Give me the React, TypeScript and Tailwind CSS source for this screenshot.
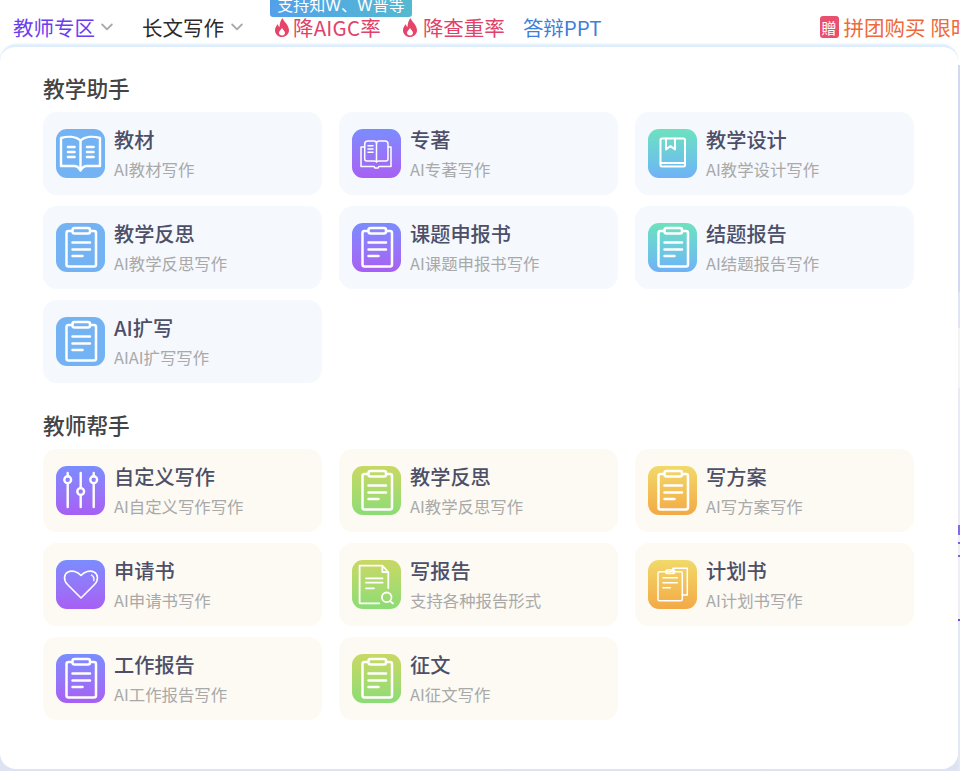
import { ReactNode } from 'react';

const FONT = "font-['Noto_Sans_CJK_SC','Noto_Sans',sans-serif]";
const LATIN = "font-['Inter','Noto_Sans_CJK_SC',sans-serif]";

const BLUE = 'bg-[#74b3f3]';
const PURPLE = 'bg-linear-to-b from-[#7a8cff] to-[#a75ff3]';
const TEAL = 'bg-linear-to-b from-[#6de2bd] to-[#6fb2f8]';
const GREEN = 'bg-linear-to-b from-[#c8d864] to-[#8bdc75]';
const ORANGE = 'bg-linear-to-b from-[#f1d96a] to-[#f3a945]';

// all icons share a 49x49 box with white strokes
const Svg = ({ children }: { children: ReactNode }) => (
  <svg viewBox="0 0 49 49" className="w-full h-full" fill="none" stroke="#fff" strokeLinecap="round" strokeLinejoin="round">
    {children}
  </svg>
);

const Clipboard = () => (
  <Svg>
    <g strokeWidth="2.500">
      <path d="M16 8h-3.500a2 2 0 0 0-2 2v31.500a2 2 0 0 0 2 2H38a2 2 0 0 0 2-2V10a2 2 0 0 0-2-2h-3.500" />
      <rect x="16.500" y="5" width="17.500" height="5.500" rx="2" />
      <path d="M16.500 19.500h17.500M16.500 26.500h17.500M16.500 33h10" />
    </g>
  </Svg>
);

const OpenBook = () => (
  <Svg>
    <g strokeWidth="2.400">
      <path d="M5 9c7-2 15-1.500 19.500 2.500C29 7.500 37 7 44 9v28H31c-3 0-5 1.500-6.500 4.500C23 38.500 21 37 18 37H5z" />
      <path d="M24.500 11.500V41" />
    </g>
    <path d="M12 18h6.500M12 23h6.500M12 28h6.500M31 18h6.500M31 23h6.500M31 28h6.500" strokeWidth="2.600" />
  </Svg>
);

const MonoBook = () => (
  <Svg>
    <g strokeWidth="1.500">
      <path d="M24.500 33V14.500c0-1.500-1-2.500-2.500-2.500h-6c-2 0-3.300 1-3.300 3v15c0 1.500 1 2 2.300 2h7c1.500 0 2.500.5 2.500 1" />
      <path d="M24.500 14.500c0-1.500 1-2.500 2.500-2.500h6c2 0 3 1 3 3v15c0 1.500-1 2-2.300 2h-7c-1.500 0-2.200.5-2.200 1" />
      <path d="M12.700 18H9v19.500h13l1 1.500h3l1-1.500h12V18h-3" />
      <path d="M16 16.700h5M16 20h5M16 23.300h5" />
    </g>
  </Svg>
);

const BookmarkBook = () => (
  <Svg>
    <g strokeWidth="2">
      <rect x="12.500" y="9.500" width="24.500" height="28" rx="1.500" />
      <path d="M12.500 34h24.500" />
      <path d="M18 9.500v11l4.500-3.500 4.500 3.500v-11" />
    </g>
  </Svg>
);

const Sliders = () => (
  <Svg>
    <g strokeWidth="2.400">
      <path d="M11.700 7v3.200M11.700 17.200V41M24.700 7v15M24.700 29v12M37.700 7v3.200M37.700 17.200V41" />
      <circle cx="11.700" cy="13.700" r="3.400" />
      <circle cx="24.700" cy="25.500" r="3.400" />
      <circle cx="37.700" cy="13.700" r="3.400" />
    </g>
  </Svg>
);

const Heart = () => (
  <Svg>
    <path d="M25 38 11.500 24.500C7 20 8 14 12 12c4-2 9.500-.5 13 3.500C28.500 11.500 34 10 38 12c4 2 5 8 .5 12.500z" strokeWidth="1.600" />
    <path d="M35.500 15c2 1.200 2.800 3.200 2.300 5.500" strokeWidth="1.400" />
  </Svg>
);

const FileSearch = () => (
  <Svg>
    <g strokeWidth="1.800">
      <path d="M27.300 43.300H7.600V5.700h22.700l6 6.300V28M30.300 5.700V12h6" />
      <path d="M14 18.300h16.600M14 22.700h16.600M14 28.300h8" />
      <circle cx="34.700" cy="37.300" r="4.800" />
      <path d="M38 41l3 2.500" />
    </g>
  </Svg>
);

const Copies = () => (
  <Svg>
    <g strokeWidth="1.500">
      <path d="M25 11V8.300h14.300V35h-5" />
      <rect x="10" y="11.700" width="24.300" height="29" rx="1.500" />
      <rect x="17.700" y="10" width="9" height="3.500" rx="1.500" />
      <path d="M15 17.700h14.300M15 22.700h14.300M15 27.700h7.300" />
    </g>
  </Svg>
);

const Flame = () => (
  <svg viewBox="0 0 14 19" className="w-[14px] h-[19px] shrink-0" fill="#e6456a">
    <path
      fillRule="evenodd"
      d="M7.500 0C8 3 13.800 6.500 14 12c.1 4-3 7-7 7s-7-3-7-6.800C0 9.500 1.500 7.500 3 6c0 1.500.5 2.500 1.500 3C4.500 6 5.500 2.500 7.500 0zM7 10c-.5 1.500-3 2.500-3 5 0 1.500 1.300 2.500 3 2.500s3-1 3-2.500c0-2.500-2.500-3.500-3-5z"
    />
  </svg>
);

const Chevron = () => (
  <svg viewBox="0 0 12 8" className="w-3 h-2 shrink-0" fill="none" stroke="#a9a9a9" strokeWidth="1.800" strokeLinecap="round" strokeLinejoin="round">
    <path d="M1.200 1.500 6 6.300l4.800-4.800" />
  </svg>
);

interface CardProps {
  title: string;
  sub: string;
  icon: ReactNode;
  tile: string;
  warm?: boolean;
}

const Card = ({ title, sub, icon, tile, warm }: CardProps) => (
  <div className={`flex h-[83px] rounded-[14px] pl-[13px] pt-[17px] ${warm ? 'bg-[#fcfaf3]' : 'bg-[#f5f8fd]'}`}>
    <div className={`w-[49px] h-[49px] rounded-[11px] shrink-0 ${tile}`}>{icon}</div>
    <div className="ml-[9px] flex flex-col">
      <div className="text-[20.200px] leading-[24px] mt-[-1px] font-medium text-[#4d4f68] whitespace-nowrap">{title}</div>
      <div className="text-[16.400px] leading-[20px] mt-[7px] text-[#a9a9a9] whitespace-nowrap">{sub}</div>
    </div>
  </div>
);

const Section = ({ title, children }: { title: string; children: ReactNode }) => (
  <section>
    <h2 className="text-[21.700px] leading-[26px] font-medium text-[#444444]">{title}</h2>
    <div className="grid grid-cols-[279px_279px_279px] gap-x-[17px] gap-y-[11px] mt-[11px]">{children}</div>
  </section>
);

export default function App() {
  return (
    <div className={`relative w-[960px] h-[771px] overflow-hidden bg-white ${FONT}`}>
      {/* Top nav */}
      <nav className="flex items-center h-[45px] pt-[9px] text-[20.500px] whitespace-nowrap">
        <span className="ml-[13px] text-[#6b3df0]">教师专区</span>
        <span className="ml-[6px]"><Chevron /></span>
        <span className="ml-[29px] text-[#2b2b2b]">长文写作</span>
        <span className="ml-[7px]"><Chevron /></span>
        <span className="ml-[32px] flex items-center">
          <Flame />
          <span className="ml-[4px] text-[#e0426a] tracking-[0.200px]">降AIGC率</span>
        </span>
        <span className="ml-[22px] flex items-center">
          <Flame />
          <span className="ml-[6px] text-[#e0426a]">降查重率</span>
        </span>
        <span className="ml-[18px] text-[#3f7fd9]">答辩PPT</span>
        <span className="ml-[218px] flex items-center text-[#ee6a3c]">
          <span className="flex items-center justify-center w-[19px] h-[22px] rounded-[3px] bg-[#e8506e] text-white text-[15px] leading-none">贈</span>
          <span className="ml-[5px]">拼团购买 限时</span>
        </span>
      </nav>

      {/* Hint badge above the AIGC link */}
      <div className={`absolute left-[270px] top-[-7px] w-[142px] h-[24px] rounded-b-[3px] bg-linear-to-r from-[#52a0ea] to-[#54b9d0] text-white text-[16px] leading-[24px] text-center whitespace-nowrap ${LATIN}`}>
        支持知W、W普等
      </div>

      {/* Dropdown panel and the page showing behind it */}
      <div className="flex h-[726px] bg-linear-to-b from-white from-50% to-[#dde3f1] to-50%">
        <div className="w-[958px] h-[724px] shrink-0 bg-white rounded-[16px] border-t-2 border-[#dfeefc] shadow-[0_-1px_2px_#dfeefc] pl-[43px] pt-[28px]">
          <Section title="教学助手">
            <Card title="教材" sub="AI教材写作" tile={BLUE} icon={<OpenBook />} />
            <Card title="专著" sub="AI专著写作" tile={PURPLE} icon={<MonoBook />} />
            <Card title="教学设计" sub="AI教学设计写作" tile={TEAL} icon={<BookmarkBook />} />
            <Card title="教学反思" sub="AI教学反思写作" tile={BLUE} icon={<Clipboard />} />
            <Card title="课题申报书" sub="AI课题申报书写作" tile={PURPLE} icon={<Clipboard />} />
            <Card title="结题报告" sub="AI结题报告写作" tile={TEAL} icon={<Clipboard />} />
            <Card title="AI扩写" sub="AIAI扩写写作" tile={BLUE} icon={<Clipboard />} />
          </Section>
          <div className="h-[29px]" />
          <Section title="教师帮手">
            <Card warm title="自定义写作" sub="AI自定义写作写作" tile={PURPLE} icon={<Sliders />} />
            <Card warm title="教学反思" sub="AI教学反思写作" tile={GREEN} icon={<Clipboard />} />
            <Card warm title="写方案" sub="AI写方案写作" tile={ORANGE} icon={<Clipboard />} />
            <Card warm title="申请书" sub="AI申请书写作" tile={PURPLE} icon={<Heart />} />
            <Card warm title="写报告" sub="支持各种报告形式" tile={GREEN} icon={<FileSearch />} />
            <Card warm title="计划书" sub="AI计划书写作" tile={ORANGE} icon={<Copies />} />
            <Card warm title="工作报告" sub="AI工作报告写作" tile={PURPLE} icon={<Clipboard />} />
            <Card warm title="征文" sub="AI征文写作" tile={GREEN} icon={<Clipboard />} />
          </Section>
        </div>
        {/* sliver of the page behind the panel */}
        <div className="flex-1 flex flex-col">
          <div className="h-[20px] bg-white" />
          <div className="h-[227px] bg-[#d3d8f5]" />
          <div className="h-[36px] bg-[#e0e4f5]" />
          <div className="h-[60px] bg-[#f3f3f5]" />
          <div className="h-[137px] bg-[#e8eaf6]" />
          <div className="h-[10px] bg-[#8468ee]" />
          <div className="h-[7px] bg-[#eeeef6]" />
          <div className="h-[2px] bg-[#7b5cf0]" />
          <div className="h-[11px] bg-[#eeeef6]" />
          <div className="h-[2px] bg-[#7b5cf0]" />
          <div className="h-[62px] bg-[#eeeef6]" />
          <div className="h-[2px] bg-[#6a4cf0]" />
          <div className="flex-1 bg-[#e4e8f4]" />
        </div>
      </div>
    </div>
  );
}
